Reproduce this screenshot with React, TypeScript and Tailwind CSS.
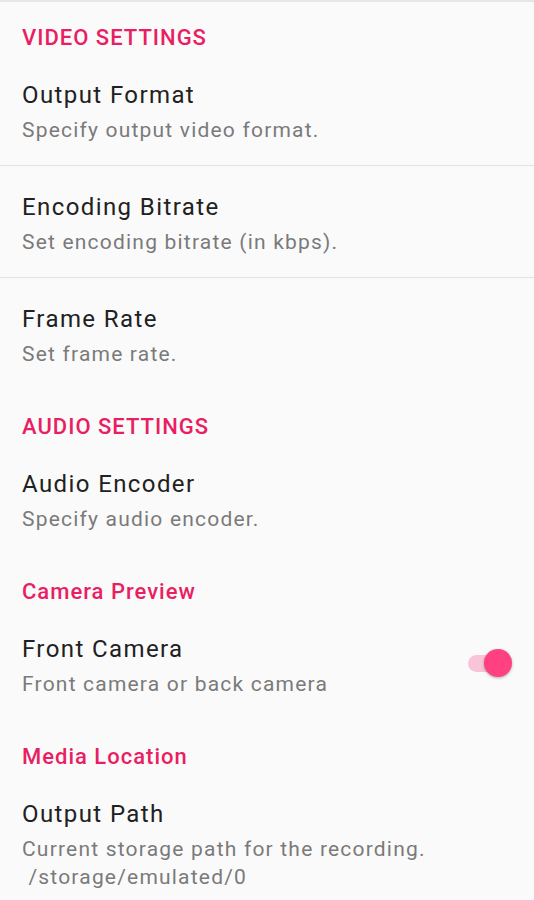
import React from 'react';

type Item = { title: string; summary: string[]; toggle?: boolean };
type Section = { header: string; items: Item[] };

const SECTIONS: Section[] = [
  {
    header: 'VIDEO SETTINGS',
    items: [
      { title: 'Output Format', summary: ['Specify output video format.'] },
      { title: 'Encoding Bitrate', summary: ['Set encoding bitrate (in kbps).'] },
      { title: 'Frame Rate', summary: ['Set frame rate.'] },
    ],
  },
  {
    header: 'AUDIO SETTINGS',
    items: [{ title: 'Audio Encoder', summary: ['Specify audio encoder.'] }],
  },
  {
    header: 'Camera Preview',
    items: [{ title: 'Front Camera', summary: ['Front camera or back camera'], toggle: true }],
  },
  {
    header: 'Media Location',
    items: [
      {
        title: 'Output Path',
        summary: ['Current storage path for the recording.', '\u00a0/storage/emulated/0'],
      },
    ],
  },
];

function Toggle() {
  return (
    <div className="relative mr-[10px] mb-[5px] h-[28px] w-[44px] shrink-0">
      <div className="absolute left-[2px] top-[6px] h-[17px] w-[38px] rounded-full bg-[#f9c4d7]" />
      <div className="absolute right-[-2px] top-0 h-[28px] w-[28px] rounded-full bg-[#ff4081] shadow-[0_1px_3px_rgba(0,0,0,0.3)]" />
    </div>
  );
}

function PrefRow({ item, divider }: { item: Item; divider: boolean }) {
  return (
    <div className={'flex items-center pl-[22px] pr-[14px] pt-[24px] ' + (divider ? 'pb-[21px] border-b border-[#e3e3e3]' : 'pb-[23px]')}>
      <div className="min-w-0 flex-1">
        <div className="text-[24px] leading-[34px] tracking-[1.4px] text-[#212121]">{item.title}</div>
        <div className="mt-[4px] text-[21px] leading-[28px] tracking-[1.2px] text-[#7a7a7a]">
          {item.summary.map((s, i) => (
            <div key={i} className="whitespace-nowrap">{s}</div>
          ))}
        </div>
      </div>
      {item.toggle && <Toggle />}
    </div>
  );
}

export default function App() {
  return (
    <div className="min-h-[900px] w-[534px] overflow-hidden border-t-2 border-[#e6e6e6] bg-[#fafafa]" style={{ fontFamily: 'Roboto, "Noto Sans", sans-serif' }}>
      {SECTIONS.map(sec => (
        <div key={sec.header}>
          <div className="pl-[22px] pt-[22px] pb-[2px] text-[22px] font-medium leading-[28px] tracking-[1px] text-[#e91e63]">
            {sec.header}
          </div>
          {sec.items.map((item, i) => (
            <PrefRow key={item.title} item={item} divider={i < sec.items.length - 1} />
          ))}
        </div>
      ))}
    </div>
  );
}
